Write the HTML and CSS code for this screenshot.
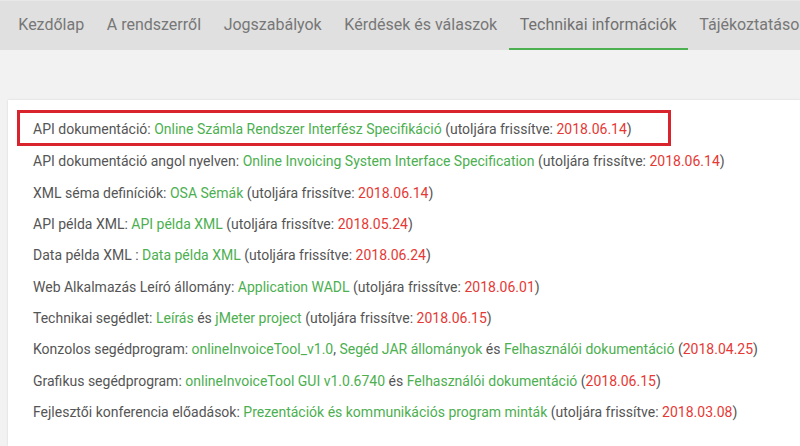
FILE: index.html
```html
<!DOCTYPE html>
<html lang="hu">
<head>
    <meta charset="UTF-8">
    <meta name="viewport" content="width=device-width, initial-scale=1.0">
    <title>Technikai információk</title>
    <link rel="stylesheet" href="styles.css">
</head>
<body>
    <nav class="tabs">
        <a class="tab">Kezdőlap</a>
        <a class="tab">A rendszerről</a>
        <a class="tab">Jogszabályok</a>
        <a class="tab">Kérdések és válaszok</a>
        <a class="tab active">Technikai információk</a>
        <a class="tab">Tájékoztatások</a>
    </nav>
    <main class="content">
        <div class="card">
            <div class="item highlight">API dokumentáció: <a>Online Számla Rendszer Interfész Specifikáció</a> (utoljára frissítve: <span class="date">2018.06.14</span>)</div>
            <div class="item">API dokumentáció angol nyelven: <a>Online Invoicing System Interface Specification</a> (utoljára frissítve: <span class="date">2018.06.14</span>)</div>
            <div class="item">XML séma definíciók: <a>OSA Sémák</a> (utoljára frissítve: <span class="date">2018.06.14</span>)</div>
            <div class="item">API példa XML: <a>API példa XML</a> (utoljára frissítve: <span class="date">2018.05.24</span>)</div>
            <div class="item">Data példa XML : <a>Data példa XML</a> (utoljára frissítve: <span class="date">2018.06.24</span>)</div>
            <div class="item">Web Alkalmazás Leíró állomány: <a>Application WADL</a> (utoljára frissítve: <span class="date">2018.06.01</span>)</div>
            <div class="item">Technikai segédlet: <a>Leírás</a> és <a>jMeter project</a> (utoljára frissítve: <span class="date">2018.06.15</span>)</div>
            <div class="item">Konzolos segédprogram: <a>onlineInvoiceTool_v1.0</a>, <a>Segéd JAR állományok</a> és <a>Felhasználói dokumentáció</a> (<span class="date">2018.04.25</span>)</div>
            <div class="item">Grafikus segédprogram: <a>onlineInvoiceTool GUI v1.0.6740</a> és <a>Felhasználói dokumentáció</a> (<span class="date">2018.06.15</span>)</div>
            <div class="item">Fejlesztői konferencia előadások: <a>Prezentációk és kommunikációs program minták</a> (utoljára frissítve: <span class="date">2018.03.08</span>)</div>
        </div>
    </main>
</body>
</html>
```
FILE: styles.css
```css
:root {
    --color-nav: #e0e0e0;
    --color-page: #f2f2f2;
    --color-text: #555555;
    --color-link: #4caf50;
    --color-date: #e53935;
    --color-mark: #d9232d;
}

* {
    padding: 0;
    margin: 0;
    box-sizing: border-box;
    font-family: Roboto, "Liberation Sans", Arial, sans-serif;
}

body {
    background-color: var(--color-page);
    height: 446px;
    overflow: hidden;
}

.tabs {
    height: 50px;
    background-color: var(--color-nav);
    border-top: 1px solid #e8e8e8;
    display: flex;
    padding-left: 7px;
    white-space: nowrap;
    overflow: hidden;
}

.tab {
    height: 49px;
    padding: 0 11.3px;
    display: flex;
    align-items: center;
    font-size: 16px;
    color: #777777;
    border-bottom: 2px solid transparent;
    cursor: pointer;
}

.tab.active {
    color: #707070;
    border-bottom-color: var(--color-link);
}

.content {
    padding: 50px 0 0 8px;
}

.card {
    background-color: #ffffff;
    height: 346px;
    padding: 10px 0 0 9px;
    box-shadow: 0 0 2px rgba(0, 0, 0, 0.12);
    font-size: 14px;
    color: var(--color-text);
}

.item {
    padding: 5px 0 5px 16px;
    line-height: 21.33px;
    white-space: nowrap;
}

.item a {
    color: var(--color-link);
    cursor: pointer;
}

.date {
    color: var(--color-date);
}

.highlight {
    width: 654px;
    border: 3px solid var(--color-mark);
    padding: 6px 0 3px 13px;
}
```
